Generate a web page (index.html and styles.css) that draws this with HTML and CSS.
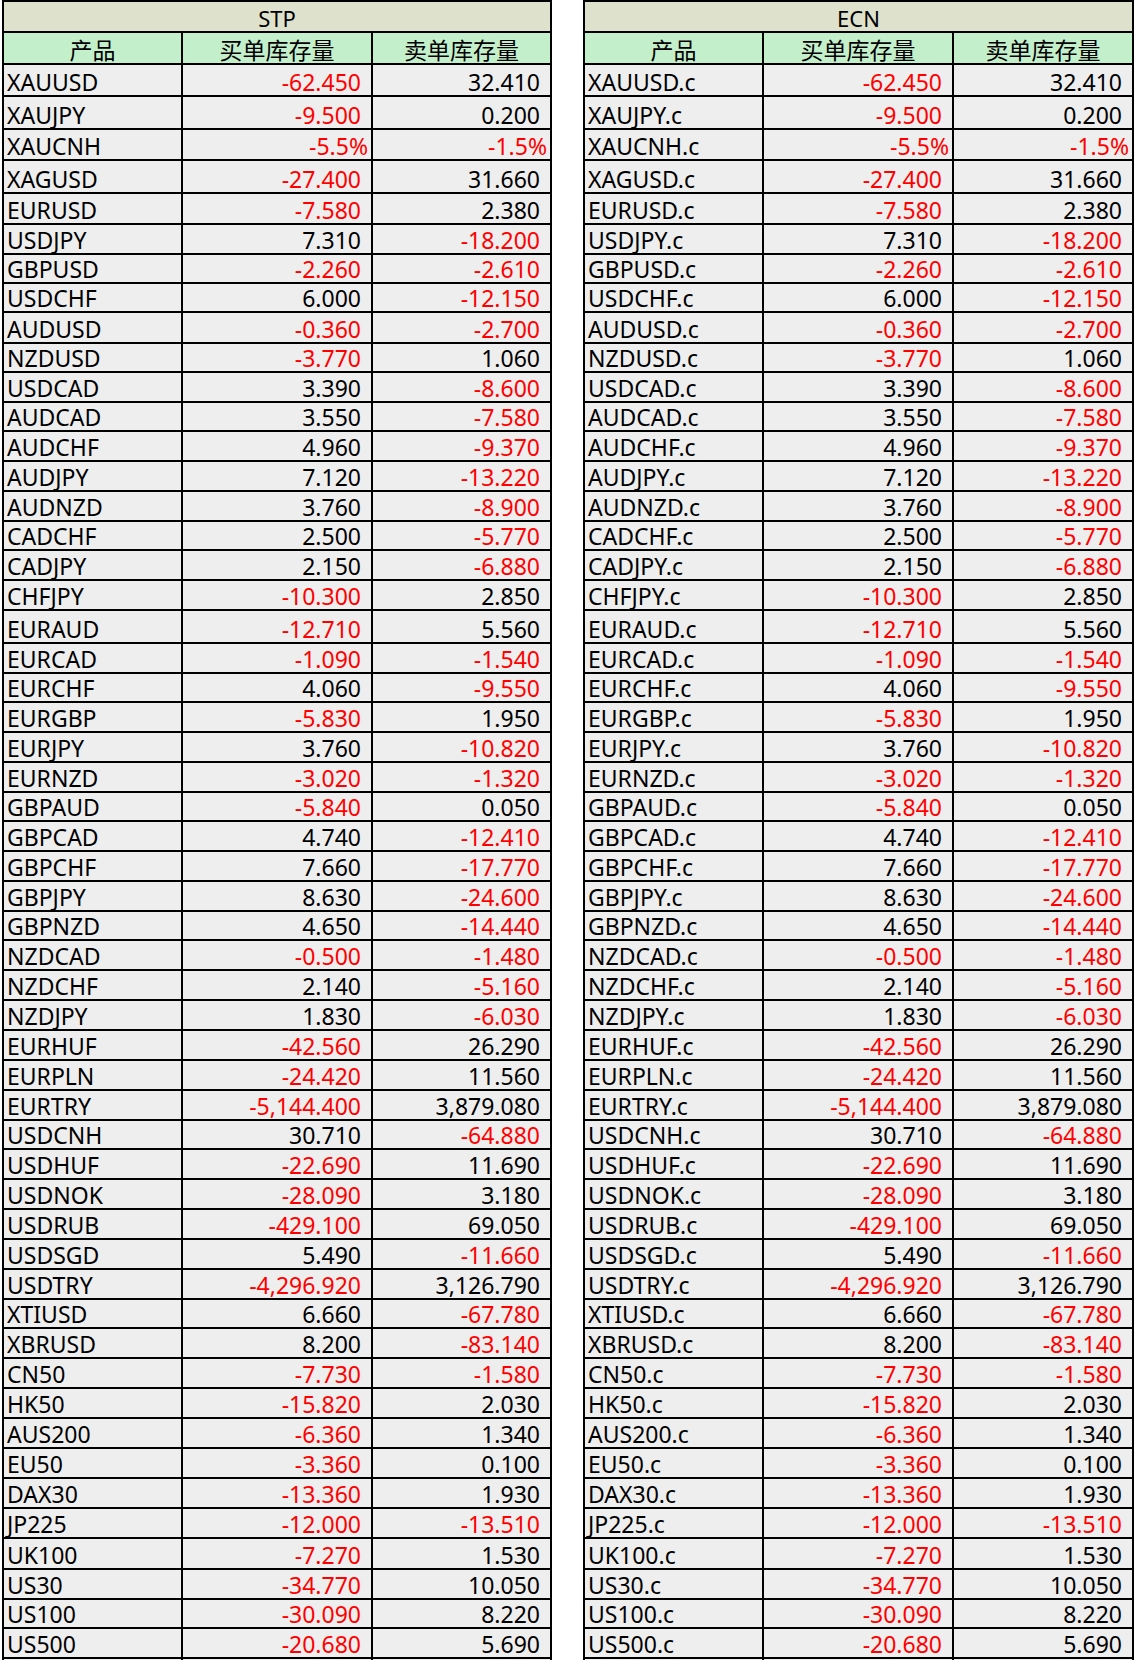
FILE: index.html
```html
<!DOCTYPE html>
<html lang="zh-CN">
<head>
<meta charset="utf-8">
<title>库存量</title>
<link rel="stylesheet" href="styles.css">
</head>
<body>
<div class="page">
  <div class="tbl stp">
    <div class="title">STP</div>
    <div class="row head"><div class="c">产品</div><div class="c">买单库存量</div><div class="c">卖单库存量</div></div>
    <div class="row h32"><div class="c">XAUUSD</div><div class="c n r">-62.450</div><div class="c n">32.410</div></div>
    <div class="row h33"><div class="c">XAUJPY</div><div class="c n r">-9.500</div><div class="c n">0.200</div></div>
    <div class="row h31"><div class="c">XAUCNH</div><div class="c p r">-5.5%</div><div class="c p r">-1.5%</div></div>
    <div class="row h33"><div class="c">XAGUSD</div><div class="c n r">-27.400</div><div class="c n">31.660</div></div>
    <div class="row h31"><div class="c">EURUSD</div><div class="c n r">-7.580</div><div class="c n">2.380</div></div>
    <div class="row"><div class="c">USDJPY</div><div class="c n">7.310</div><div class="c n r">-18.200</div></div>
    <div class="row h29"><div class="c">GBPUSD</div><div class="c n r">-2.260</div><div class="c n r">-2.610</div></div>
    <div class="row h29"><div class="c">USDCHF</div><div class="c n">6.000</div><div class="c n r">-12.150</div></div>
    <div class="row h31"><div class="c">AUDUSD</div><div class="c n r">-0.360</div><div class="c n r">-2.700</div></div>
    <div class="row h29"><div class="c">NZDUSD</div><div class="c n r">-3.770</div><div class="c n">1.060</div></div>
    <div class="row"><div class="c">USDCAD</div><div class="c n">3.390</div><div class="c n r">-8.600</div></div>
    <div class="row h29"><div class="c">AUDCAD</div><div class="c n">3.550</div><div class="c n r">-7.580</div></div>
    <div class="row"><div class="c">AUDCHF</div><div class="c n">4.960</div><div class="c n r">-9.370</div></div>
    <div class="row"><div class="c">AUDJPY</div><div class="c n">7.120</div><div class="c n r">-13.220</div></div>
    <div class="row"><div class="c">AUDNZD</div><div class="c n">3.760</div><div class="c n r">-8.900</div></div>
    <div class="row h29"><div class="c">CADCHF</div><div class="c n">2.500</div><div class="c n r">-5.770</div></div>
    <div class="row"><div class="c">CADJPY</div><div class="c n">2.150</div><div class="c n r">-6.880</div></div>
    <div class="row"><div class="c">CHFJPY</div><div class="c n r">-10.300</div><div class="c n">2.850</div></div>
    <div class="row h33"><div class="c">EURAUD</div><div class="c n r">-12.710</div><div class="c n">5.560</div></div>
    <div class="row"><div class="c">EURCAD</div><div class="c n r">-1.090</div><div class="c n r">-1.540</div></div>
    <div class="row h29"><div class="c">EURCHF</div><div class="c n">4.060</div><div class="c n r">-9.550</div></div>
    <div class="row"><div class="c">EURGBP</div><div class="c n r">-5.830</div><div class="c n">1.950</div></div>
    <div class="row"><div class="c">EURJPY</div><div class="c n">3.760</div><div class="c n r">-10.820</div></div>
    <div class="row"><div class="c">EURNZD</div><div class="c n r">-3.020</div><div class="c n r">-1.320</div></div>
    <div class="row h29"><div class="c">GBPAUD</div><div class="c n r">-5.840</div><div class="c n">0.050</div></div>
    <div class="row"><div class="c">GBPCAD</div><div class="c n">4.740</div><div class="c n r">-12.410</div></div>
    <div class="row"><div class="c">GBPCHF</div><div class="c n">7.660</div><div class="c n r">-17.770</div></div>
    <div class="row"><div class="c">GBPJPY</div><div class="c n">8.630</div><div class="c n r">-24.600</div></div>
    <div class="row h29"><div class="c">GBPNZD</div><div class="c n">4.650</div><div class="c n r">-14.440</div></div>
    <div class="row"><div class="c">NZDCAD</div><div class="c n r">-0.500</div><div class="c n r">-1.480</div></div>
    <div class="row"><div class="c">NZDCHF</div><div class="c n">2.140</div><div class="c n r">-5.160</div></div>
    <div class="row"><div class="c">NZDJPY</div><div class="c n">1.830</div><div class="c n r">-6.030</div></div>
    <div class="row"><div class="c">EURHUF</div><div class="c n r">-42.560</div><div class="c n">26.290</div></div>
    <div class="row"><div class="c">EURPLN</div><div class="c n r">-24.420</div><div class="c n">11.560</div></div>
    <div class="row"><div class="c">EURTRY</div><div class="c n r">-5,144.400</div><div class="c n">3,879.080</div></div>
    <div class="row h29"><div class="c">USDCNH</div><div class="c n">30.710</div><div class="c n r">-64.880</div></div>
    <div class="row"><div class="c">USDHUF</div><div class="c n r">-22.690</div><div class="c n">11.690</div></div>
    <div class="row"><div class="c">USDNOK</div><div class="c n r">-28.090</div><div class="c n">3.180</div></div>
    <div class="row"><div class="c">USDRUB</div><div class="c n r">-429.100</div><div class="c n">69.050</div></div>
    <div class="row"><div class="c">USDSGD</div><div class="c n">5.490</div><div class="c n r">-11.660</div></div>
    <div class="row"><div class="c">USDTRY</div><div class="c n r">-4,296.920</div><div class="c n">3,126.790</div></div>
    <div class="row h29"><div class="c">XTIUSD</div><div class="c n">6.660</div><div class="c n r">-67.780</div></div>
    <div class="row"><div class="c">XBRUSD</div><div class="c n">8.200</div><div class="c n r">-83.140</div></div>
    <div class="row"><div class="c">CN50</div><div class="c n r">-7.730</div><div class="c n r">-1.580</div></div>
    <div class="row"><div class="c">HK50</div><div class="c n r">-15.820</div><div class="c n">2.030</div></div>
    <div class="row"><div class="c">AUS200</div><div class="c n r">-6.360</div><div class="c n">1.340</div></div>
    <div class="row"><div class="c">EU50</div><div class="c n r">-3.360</div><div class="c n">0.100</div></div>
    <div class="row"><div class="c">DAX30</div><div class="c n r">-13.360</div><div class="c n">1.930</div></div>
    <div class="row"><div class="c">JP225</div><div class="c n r">-12.000</div><div class="c n r">-13.510</div></div>
    <div class="row h31"><div class="c">UK100</div><div class="c n r">-7.270</div><div class="c n">1.530</div></div>
    <div class="row"><div class="c">US30</div><div class="c n r">-34.770</div><div class="c n">10.050</div></div>
    <div class="row h29"><div class="c">US100</div><div class="c n r">-30.090</div><div class="c n">8.220</div></div>
    <div class="row"><div class="c">US500</div><div class="c n r">-20.680</div><div class="c n">5.690</div></div>
    <div class="row"><div class="c"></div><div class="c"></div><div class="c"></div></div>
  </div>

  <div class="tbl ecn">
    <div class="title">ECN</div>
    <div class="row head"><div class="c">产品</div><div class="c">买单库存量</div><div class="c">卖单库存量</div></div>
    <div class="row h32"><div class="c">XAUUSD.c</div><div class="c n r">-62.450</div><div class="c n">32.410</div></div>
    <div class="row h33"><div class="c">XAUJPY.c</div><div class="c n r">-9.500</div><div class="c n">0.200</div></div>
    <div class="row h31"><div class="c">XAUCNH.c</div><div class="c p r">-5.5%</div><div class="c p r">-1.5%</div></div>
    <div class="row h33"><div class="c">XAGUSD.c</div><div class="c n r">-27.400</div><div class="c n">31.660</div></div>
    <div class="row h31"><div class="c">EURUSD.c</div><div class="c n r">-7.580</div><div class="c n">2.380</div></div>
    <div class="row"><div class="c">USDJPY.c</div><div class="c n">7.310</div><div class="c n r">-18.200</div></div>
    <div class="row h29"><div class="c">GBPUSD.c</div><div class="c n r">-2.260</div><div class="c n r">-2.610</div></div>
    <div class="row h29"><div class="c">USDCHF.c</div><div class="c n">6.000</div><div class="c n r">-12.150</div></div>
    <div class="row h31"><div class="c">AUDUSD.c</div><div class="c n r">-0.360</div><div class="c n r">-2.700</div></div>
    <div class="row h29"><div class="c">NZDUSD.c</div><div class="c n r">-3.770</div><div class="c n">1.060</div></div>
    <div class="row"><div class="c">USDCAD.c</div><div class="c n">3.390</div><div class="c n r">-8.600</div></div>
    <div class="row h29"><div class="c">AUDCAD.c</div><div class="c n">3.550</div><div class="c n r">-7.580</div></div>
    <div class="row"><div class="c">AUDCHF.c</div><div class="c n">4.960</div><div class="c n r">-9.370</div></div>
    <div class="row"><div class="c">AUDJPY.c</div><div class="c n">7.120</div><div class="c n r">-13.220</div></div>
    <div class="row"><div class="c">AUDNZD.c</div><div class="c n">3.760</div><div class="c n r">-8.900</div></div>
    <div class="row h29"><div class="c">CADCHF.c</div><div class="c n">2.500</div><div class="c n r">-5.770</div></div>
    <div class="row"><div class="c">CADJPY.c</div><div class="c n">2.150</div><div class="c n r">-6.880</div></div>
    <div class="row"><div class="c">CHFJPY.c</div><div class="c n r">-10.300</div><div class="c n">2.850</div></div>
    <div class="row h33"><div class="c">EURAUD.c</div><div class="c n r">-12.710</div><div class="c n">5.560</div></div>
    <div class="row"><div class="c">EURCAD.c</div><div class="c n r">-1.090</div><div class="c n r">-1.540</div></div>
    <div class="row h29"><div class="c">EURCHF.c</div><div class="c n">4.060</div><div class="c n r">-9.550</div></div>
    <div class="row"><div class="c">EURGBP.c</div><div class="c n r">-5.830</div><div class="c n">1.950</div></div>
    <div class="row"><div class="c">EURJPY.c</div><div class="c n">3.760</div><div class="c n r">-10.820</div></div>
    <div class="row"><div class="c">EURNZD.c</div><div class="c n r">-3.020</div><div class="c n r">-1.320</div></div>
    <div class="row h29"><div class="c">GBPAUD.c</div><div class="c n r">-5.840</div><div class="c n">0.050</div></div>
    <div class="row"><div class="c">GBPCAD.c</div><div class="c n">4.740</div><div class="c n r">-12.410</div></div>
    <div class="row"><div class="c">GBPCHF.c</div><div class="c n">7.660</div><div class="c n r">-17.770</div></div>
    <div class="row"><div class="c">GBPJPY.c</div><div class="c n">8.630</div><div class="c n r">-24.600</div></div>
    <div class="row h29"><div class="c">GBPNZD.c</div><div class="c n">4.650</div><div class="c n r">-14.440</div></div>
    <div class="row"><div class="c">NZDCAD.c</div><div class="c n r">-0.500</div><div class="c n r">-1.480</div></div>
    <div class="row"><div class="c">NZDCHF.c</div><div class="c n">2.140</div><div class="c n r">-5.160</div></div>
    <div class="row"><div class="c">NZDJPY.c</div><div class="c n">1.830</div><div class="c n r">-6.030</div></div>
    <div class="row"><div class="c">EURHUF.c</div><div class="c n r">-42.560</div><div class="c n">26.290</div></div>
    <div class="row"><div class="c">EURPLN.c</div><div class="c n r">-24.420</div><div class="c n">11.560</div></div>
    <div class="row"><div class="c">EURTRY.c</div><div class="c n r">-5,144.400</div><div class="c n">3,879.080</div></div>
    <div class="row h29"><div class="c">USDCNH.c</div><div class="c n">30.710</div><div class="c n r">-64.880</div></div>
    <div class="row"><div class="c">USDHUF.c</div><div class="c n r">-22.690</div><div class="c n">11.690</div></div>
    <div class="row"><div class="c">USDNOK.c</div><div class="c n r">-28.090</div><div class="c n">3.180</div></div>
    <div class="row"><div class="c">USDRUB.c</div><div class="c n r">-429.100</div><div class="c n">69.050</div></div>
    <div class="row"><div class="c">USDSGD.c</div><div class="c n">5.490</div><div class="c n r">-11.660</div></div>
    <div class="row"><div class="c">USDTRY.c</div><div class="c n r">-4,296.920</div><div class="c n">3,126.790</div></div>
    <div class="row h29"><div class="c">XTIUSD.c</div><div class="c n">6.660</div><div class="c n r">-67.780</div></div>
    <div class="row"><div class="c">XBRUSD.c</div><div class="c n">8.200</div><div class="c n r">-83.140</div></div>
    <div class="row"><div class="c">CN50.c</div><div class="c n r">-7.730</div><div class="c n r">-1.580</div></div>
    <div class="row"><div class="c">HK50.c</div><div class="c n r">-15.820</div><div class="c n">2.030</div></div>
    <div class="row"><div class="c">AUS200.c</div><div class="c n r">-6.360</div><div class="c n">1.340</div></div>
    <div class="row"><div class="c">EU50.c</div><div class="c n r">-3.360</div><div class="c n">0.100</div></div>
    <div class="row"><div class="c">DAX30.c</div><div class="c n r">-13.360</div><div class="c n">1.930</div></div>
    <div class="row"><div class="c">JP225.c</div><div class="c n r">-12.000</div><div class="c n r">-13.510</div></div>
    <div class="row h31"><div class="c">UK100.c</div><div class="c n r">-7.270</div><div class="c n">1.530</div></div>
    <div class="row"><div class="c">US30.c</div><div class="c n r">-34.770</div><div class="c n">10.050</div></div>
    <div class="row h29"><div class="c">US100.c</div><div class="c n r">-30.090</div><div class="c n">8.220</div></div>
    <div class="row"><div class="c">US500.c</div><div class="c n r">-20.680</div><div class="c n">5.690</div></div>
    <div class="row"><div class="c"></div><div class="c"></div><div class="c"></div></div>
  </div>
</div>
</body>
</html>
```

FILE: styles.css
```css
html, body {
  margin: 0;
  padding: 0;
  background: #ffffff;
}

body {
  font-family: "Noto Sans", "Noto Sans CJK SC", sans-serif;
  font-size: 23px;
  color: #000000;
}

.page {
  display: flex;
  align-items: flex-start;
  gap: 31px;
  padding-left: 2px;
}

.tbl {
  display: flex;
  flex-direction: column;
  gap: 2px;
  padding: 2px;
  background: #000000;
  box-sizing: border-box;
}

.stp { width: 550px; }
.ecn { width: 551px; }

.title {
  height: 29px;
  background: #dee2cc;
  display: flex;
  align-items: flex-end;
  justify-content: center;
  font-size: 22px;
  line-height: 26px;
}

.row {
  display: grid;
  column-gap: 2px;
  height: 28px;
}

.stp .row { grid-template-columns: 177px 188px 177px; }
.ecn .row { grid-template-columns: 177px 188px 178px; }

.row.h29 { height: 27px; }
.row.h31 { height: 29px; }
.row.h32 { height: 30px; }
.row.h33 { height: 31px; }

.row.head { height: 30px; }

.c {
  background: #eeeeee;
  display: flex;
  align-items: flex-end;
  justify-content: flex-start;
  line-height: 26px;
  padding-left: 3px;
  white-space: nowrap;
}

.head .c {
  background: #c4efcb;
  justify-content: center;
  padding-left: 0;
}

.n {
  justify-content: flex-end;
  padding-left: 0;
  padding-right: 10px;
}

.p {
  justify-content: flex-end;
  padding-left: 0;
  padding-right: 3px;
}

.r { color: #ff0000; }
```
